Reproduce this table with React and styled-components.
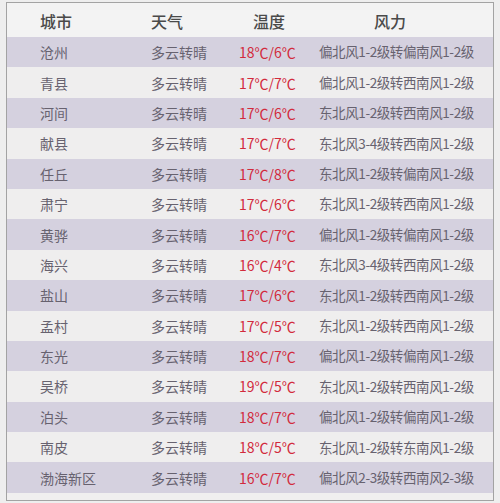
import React from 'react';
import styled, {createGlobalStyle} from 'styled-components';

const GlobalStyle = createGlobalStyle `
  html, body {
    margin: 0;
    padding: 0;
    background: #eeeeee;
  }
  body {
    font-family: "Noto Sans CJK SC", "Noto Sans", sans-serif;
  }
`;

const Page = styled.div `
  width: 500px;
  height: 503px;
  box-sizing: border-box;
  padding: 2px 6px 2px 6px;
  background: #eeeeee;
`;

const Table = styled.div `
  height: 100%;
  box-sizing: border-box;
  border: 1px solid #a3a3a3;
  background: #f0efef;
  display: flex;
  flex-direction: column;
`;

const Row = styled.div `
  display: grid;
  grid-template-columns: 33px 111px 88px 80px 1fr;
  align-items: center;
  height: ${props => props.header ? '34px' : '30.4px'};
  background: ${props => props.header
  ? '#f3f3f3'
  : props.odd ? '#d5d1df' : '#efeeee'};
`;

const HeadCell = styled.div `
  grid-column: ${props => props.col + 1};
  padding-left: ${props => `${props.shift || 0}px`};
  font-size: 16px;
  font-weight: 500;
  color: #4a4a4a;
  line-height: 1;
  padding-top: 2px;
`;

const Cell = styled.div `
  grid-column: ${props => props.col + 1};
  font-size: ${props => props.wide ? '13.5px' : '14px'};
  color: ${props => props.hot ? '#d22a3c' : '#67626f'};
  line-height: 1;
  white-space: nowrap;
  letter-spacing: ${props => props.wide ? '-0.4px' : '0'};
`;

const rows = [
  ['沧州', '多云转晴', '18℃/6℃', '偏北风1-2级转偏南风1-2级'],
  ['青县', '多云转晴', '17℃/7℃', '偏北风1-2级转西南风1-2级'],
  ['河间', '多云转晴', '17℃/6℃', '东北风1-2级转西南风1-2级'],
  ['献县', '多云转晴', '17℃/7℃', '东北风3-4级转西南风1-2级'],
  ['任丘', '多云转晴', '17℃/8℃', '东北风1-2级转偏南风1-2级'],
  ['肃宁', '多云转晴', '17℃/6℃', '东北风1-2级转西南风1-2级'],
  ['黄骅', '多云转晴', '16℃/7℃', '偏北风1-2级转偏南风1-2级'],
  ['海兴', '多云转晴', '16℃/4℃', '东北风3-4级转西南风1-2级'],
  ['盐山', '多云转晴', '17℃/6℃', '东北风1-2级转西南风1-2级'],
  ['孟村', '多云转晴', '17℃/5℃', '东北风1-2级转西南风1-2级'],
  ['东光', '多云转晴', '18℃/7℃', '偏北风1-2级转偏南风1-2级'],
  ['吴桥', '多云转晴', '19℃/5℃', '东北风1-2级转西南风1-2级'],
  ['泊头', '多云转晴', '18℃/7℃', '偏北风1-2级转偏南风1-2级'],
  ['南皮', '多云转晴', '18℃/5℃', '东北风1-2级转东南风1-2级'],
  ['渤海新区', '多云转晴', '16℃/7℃', '偏北风2-3级转西南风2-3级']
];

const App = () => (
  <Page>
    <GlobalStyle />
    <Table>
      <Row header>
        <HeadCell col={1}>城市</HeadCell>
        <HeadCell col={2} shift={-2}>天气</HeadCell>
        <HeadCell col={3} shift={14}>温度</HeadCell>
        <HeadCell col={4} shift={55}>风力</HeadCell>
      </Row>
      {rows.map((r, i) => (
        <Row key={r[0]} odd={i % 2 === 0}>
          <Cell col={1}>{r[0]}</Cell>
          <Cell col={2}>{r[1]}</Cell>
          <Cell col={3} hot>{r[2]}</Cell>
          <Cell col={4} wide>{r[3]}</Cell>
        </Row>
      ))}
    </Table>
  </Page>
);

export default App;
